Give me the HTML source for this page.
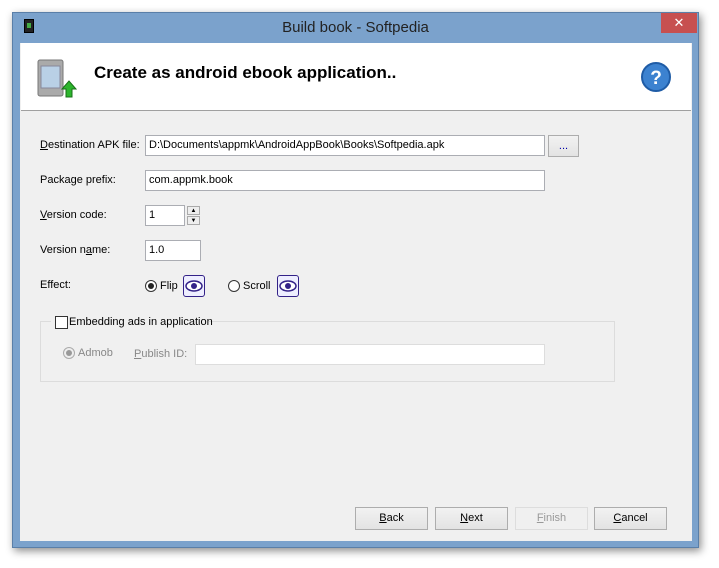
<!DOCTYPE html>
<html><head><meta charset="utf-8"><style>
*{margin:0;padding:0;box-sizing:border-box}
body{width:719px;height:568px;background:#fff;position:relative;font-family:"Liberation Sans",sans-serif;font-size:11px;color:#000;overflow:hidden}
.win{position:absolute;left:12px;top:12px;width:687px;height:536px;background:#7ba2cc;border:1px solid #5a7fa8;box-shadow:2px 3px 8px rgba(0,0,0,.45)}
.title{position:absolute;left:0;right:0;top:0;height:30px;text-align:center;line-height:30px;font-size:15px;color:#222}
.close{position:absolute;right:1px;top:0;width:36px;height:20px;background:#c75050;color:#fff;text-align:center;line-height:19px;font-size:13px}
.client{position:absolute;left:7px;top:30px;width:672px;height:498px;background:#f0f0f0}
.hdr{position:absolute;left:1px;top:0px;width:670px;height:68px;background:#fff;border-bottom:1px solid #a0a0a0}
.hdr h1{position:absolute;left:73px;top:20px;font-size:17px;font-weight:bold}
.a{position:absolute}
.lbl{position:absolute;font-size:11px}
.inp{position:absolute;background:#fff;border:1px solid #abadb3;height:21px;line-height:19px;padding-left:3px;font-size:11px}
.btn{position:absolute;height:23px;border:1px solid #adadad;background:linear-gradient(#f2f2f2,#e3e3e3);text-align:center;line-height:21px;font-size:11px}
u{text-decoration:underline}
.radio{position:absolute;width:12px;height:12px;border-radius:50%;border:1px solid #333;background:#fff}
.eye{position:absolute;width:22px;height:22px;border:1px solid #332288;border-radius:3px;background:#eef}
</style></head><body>
<div class="win">
<div class="title">Build book - Softpedia</div>
<div class="a" style="left:11px;top:6px;width:10px;height:14px;background:#222;border:1px solid #000"><div style="margin:3px 2px;width:4px;height:5px;background:#4a4"></div></div>
<div class="close">✕</div>
<div class="client">
<div class="hdr">
<svg class="a" style="left:15px;top:16px" width="42" height="40"><rect x="2" y="1" width="25" height="36" rx="2" fill="#aaa" stroke="#777"/><rect x="5" y="7" width="19" height="22" fill="#b9d0e6" stroke="#889"/><polygon points="30,38 30,30 26,30 33,22 40,30 36,30 36,38" fill="#2db52d" stroke="#187018"/></svg>
<h1>Create as android ebook application..</h1>
<svg class="a" style="left:619px;top:18px" width="32" height="32"><circle cx="16" cy="16" r="14" fill="#3c82d0" stroke="#1f5ca6" stroke-width="2"/><text x="16" y="23" text-anchor="middle" font-family="Liberation Sans" font-weight="bold" font-size="19" fill="#fff">?</text></svg>
</div>
<div class="lbl" style="left:20px;top:96px"><u>D</u>estination APK file:</div>
<div class="inp" style="left:125px;top:92px;width:400px">D:\Documents\appmk\AndroidAppBook\Books\Softpedia.apk</div>
<div class="btn" style="left:528px;top:92px;width:31px;height:22px;color:#00a">...</div>
<div class="lbl" style="left:20px;top:131px">Package prefix:</div>
<div class="inp" style="left:125px;top:127px;width:400px">com.appmk.book</div>
<div class="lbl" style="left:20px;top:166px"><u>V</u>ersion code:</div>
<div class="inp" style="left:125px;top:162px;width:40px">1</div>
<div class="a" style="left:167px;top:163px;width:13px;height:9px;border:1px solid #aaa;background:#eee;font-size:6px;text-align:center;line-height:8px">▲</div>
<div class="a" style="left:167px;top:173px;width:13px;height:9px;border:1px solid #aaa;background:#eee;font-size:6px;text-align:center;line-height:8px">▼</div>
<div class="lbl" style="left:20px;top:201px">Version n<u>a</u>me:</div>
<div class="inp" style="left:125px;top:197px;width:56px">1.0</div>
<div class="lbl" style="left:20px;top:236px">Effect:</div>
<div class="radio" style="left:125px;top:237px"><div style="margin:2px;width:6px;height:6px;border-radius:50%;background:#222"></div></div>
<div class="lbl" style="left:140px;top:237px">Flip</div>
<div class="eye" style="left:163px;top:232px"><svg width="20" height="20"><ellipse cx="10" cy="10" rx="8" ry="5" fill="#fff" stroke="#332288" stroke-width="1.5"/><circle cx="10" cy="10" r="3" fill="#332288"/></svg></div>
<div class="radio" style="left:208px;top:237px"></div>
<div class="lbl" style="left:223px;top:237px">Scroll</div>
<div class="eye" style="left:257px;top:232px"><svg width="20" height="20"><ellipse cx="10" cy="10" rx="8" ry="5" fill="#fff" stroke="#332288" stroke-width="1.5"/><circle cx="10" cy="10" r="3" fill="#332288"/></svg></div>
<div class="a" style="left:20px;top:278px;width:575px;height:61px;border:1px solid #dcdcdc"></div>
<div class="a" style="left:31px;top:272px;width:158px;height:14px;background:#f0f0f0"></div>
<div class="a" style="left:35px;top:273px;width:13px;height:13px;border:1px solid #333;background:#fff"></div>
<div class="lbl" style="left:49px;top:273px">Embedding ads in application</div>
<div class="radio" style="left:43px;top:304px;border-color:#aaa;background:#eee"><div style="margin:2px;width:6px;height:6px;border-radius:50%;background:#999"></div></div>
<div class="lbl" style="left:58px;top:304px;color:#888">Admob</div>
<div class="lbl" style="left:114px;top:305px;color:#888"><u>P</u>ublish ID:</div>
<div class="inp" style="left:175px;top:301px;width:350px;border-color:#ddd"></div>
<div class="btn" style="left:335px;top:464px;width:73px"><u>B</u>ack</div>
<div class="btn" style="left:415px;top:464px;width:73px"><u>N</u>ext</div>
<div class="btn" style="left:495px;top:464px;width:73px;color:#999;border-color:#ddd;background:#f0f0f0"><u>F</u>inish</div>
<div class="btn" style="left:574px;top:464px;width:73px"><u>C</u>ancel</div>
</div></div>
</body></html>
